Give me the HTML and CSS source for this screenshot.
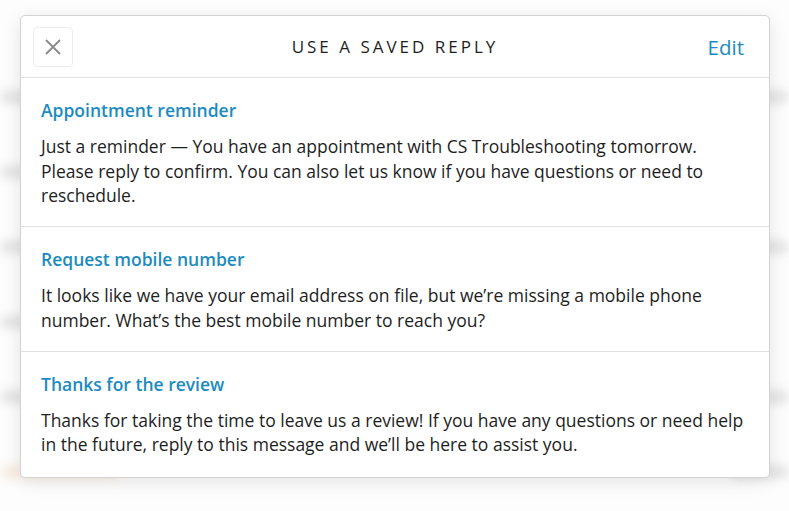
FILE: index.html
```html
<!DOCTYPE html>
<html lang="en">
<head>
    <meta charset="UTF-8">
    <meta name="viewport" content="width=device-width, initial-scale=1.0">
    <title>Use a Saved Reply</title>
    <link rel="stylesheet" href="styles.css">
</head>
<body>
    <div class="backdrop">
        <div class="bg-row"><span class="bg-bar w60"></span><span class="bg-bar w30"></span></div>
        <div class="bg-row"><span class="bg-bar w40"></span></div>
        <div class="bg-row"><span class="bg-bar w50"></span><span class="bg-bar w20"></span></div>
        <div class="bg-row"><span class="bg-bar w30"></span></div>
        <div class="bg-row"><span class="bg-bar w60"></span><span class="bg-bar w40"></span></div>
        <div class="bg-row"><span class="bg-bar w40 warm"></span><span class="bg-bar w20"></span></div>
    </div>

    <div class="modal">
        <div class="modal-header">
            <button class="close-button" aria-label="Close">
                <svg width="18" height="18" viewBox="0 0 18 18">
                    <path d="M2 2 L16 16 M16 2 L2 16" stroke="#8a8a8a" stroke-width="1.8" fill="none"/>
                </svg>
            </button>
            <h1 class="modal-title">Use a saved reply</h1>
            <a href="#" class="edit-link">Edit</a>
        </div>

        <div class="reply">
            <h2 class="reply-title">Appointment reminder</h2>
            <p class="reply-text">Just a reminder — You have an appointment with CS Troubleshooting tomorrow. Please reply to confirm. You can also let us know if you have questions or need to reschedule.</p>
        </div>
        <div class="reply">
            <h2 class="reply-title">Request mobile number</h2>
            <p class="reply-text">It looks like we have your email address on file, but we’re missing a mobile phone number. What’s the best mobile number to reach you?</p>
        </div>
        <div class="reply">
            <h2 class="reply-title">Thanks for the review</h2>
            <p class="reply-text">Thanks for taking the time to leave us a review! If you have any questions or need help in the future, reply to this message and we’ll be here to assist you.</p>
        </div>
    </div>
</body>
</html>
```

FILE: styles.css
```css
body {
    margin: 0;
    width: 789px;
    height: 511px;
    overflow: hidden;
    background: #fdfdfd;
    font-family: "Open Sans", "Noto Sans", Arial, sans-serif;
    color: #222;
    position: relative;
}
.backdrop {
    padding: 60px 0 0 0;
    filter: blur(5px);
    opacity: 0.5;
}
.bg-row {
    display: flex;
    justify-content: space-between;
    height: 75px;
}
.bg-bar {
    display: block;
    height: 14px;
    margin-top: 30px;
    background: #cfcfcf;
    border-radius: 7px;
}
.bg-bar.warm {
    background: #f4dcc8;
}
.w20 { width: 60px; }
.w30 { width: 90px; }
.w40 { width: 120px; }
.w50 { width: 150px; }
.w60 { width: 180px; }

.modal {
    position: absolute;
    left: 20px;
    top: 15px;
    width: 748px;
    background: #fff;
    border: 1px solid #d3d3d3;
    border-radius: 5px;
    box-shadow: 0 4px 18px rgba(0, 0, 0, 0.1);
}
.modal-header {
    display: flex;
    align-items: center;
    justify-content: space-between;
    height: 61px;
    padding: 0 25px 0 12px;
    border-bottom: 1px solid #e1e1e1;
    position: relative;
}
.close-button {
    width: 40px;
    height: 40px;
    padding: 0;
    background: #fff;
    border: 1px solid #ececec;
    border-radius: 4px;
    display: flex;
    align-items: center;
    justify-content: center;
}
.modal-title {
    margin: 0;
    font-size: 17px;
    font-weight: 400;
    letter-spacing: 3px;
    text-transform: uppercase;
    color: #1e1e1e;
    position: absolute;
    left: 0;
    right: 0;
    text-align: center;
    pointer-events: none;
}
.edit-link {
    font-size: 20.5px;
    color: #1b8bc0;
    text-decoration: none;
}
.reply {
    padding: 20px 20px 18.5px;
    border-bottom: 1px solid #e1e1e1;
}
.reply:last-child {
    border-bottom: none;
    padding-bottom: 20px;
}
.reply-title {
    margin: 0 0 12px;
    font-size: 17.5px;
    font-weight: 600;
    line-height: 24px;
    color: #1b8bc0;
}
.reply-text {
    margin: 0;
    font-size: 17.5px;
    line-height: 24.5px;
    color: #1e1e1e;
}
```
